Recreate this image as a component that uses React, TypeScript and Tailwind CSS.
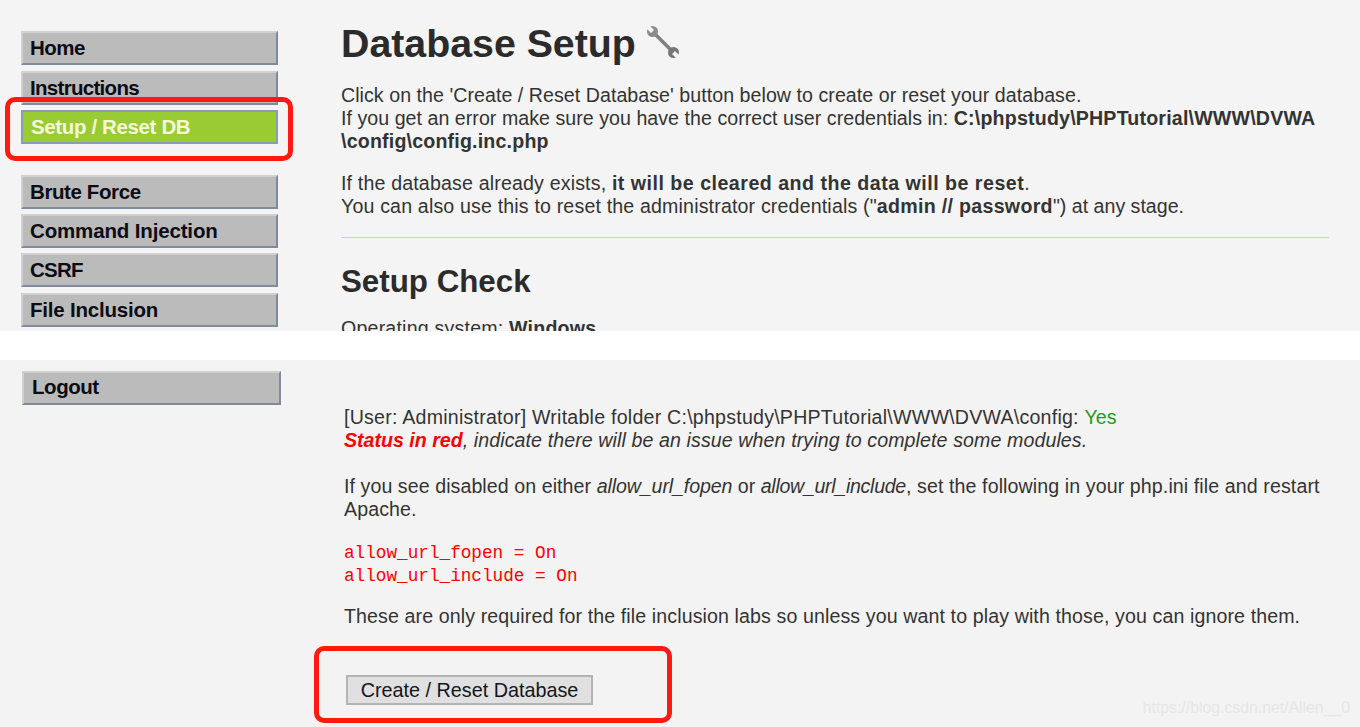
import React from 'react';

const topMenu = [
  [
    { label: 'Home', cls: 'tracking-[-0.5px]' },
    { label: 'Instructions', cls: 'mt-[1px] tracking-[-0.7px]' },
    { label: 'Setup / Reset DB', cls: 'tracking-[-0.37px]' },
  ],
  [
    { label: 'Brute Force', cls: 'tracking-[-0.4px]' },
    { label: 'Command Injection', cls: 'tracking-[-0.15px]' },
    { label: 'CSRF', cls: 'tracking-[-0.8px]' },
    { label: 'File Inclusion', cls: 'mt-[1px] tracking-[-0.2px]' },
  ],
];

const MenuItem = ({ label, cls }: { label: string; cls: string }) => {
  const active = label === 'Setup / Reset DB';
  return (
    <div
      className={`h-[34px] w-[257px] border-2 text-[20.5px] font-bold leading-[30px] ${cls} ${
        active
          ? 'border-[#8a9bb5] bg-[#99cc33] pl-2 text-[#f5f8d8]'
          : 'border-[#d0d0d0] border-r-[#7f8a9c] border-b-[#7f8a9c] bg-[#bbbbbb] pl-[7px] text-[#0c0c14]'
      }`}
    >
      {label}
    </div>
  );
};

const WrenchIcon = () => (
  <svg width="34" height="34" viewBox="0 0 34 34" className="mb-[2px] ml-[10px]">
    <path d="M7 7 L27 27" stroke="#808080" strokeWidth="3.6" />
    <circle cx="6.5" cy="6.5" r="5.5" fill="#8c8c8c" />
    <path d="M0 3 L3 0 L8 5 L5 8 Z" fill="#f4f4f4" />
    <circle cx="27.5" cy="27.5" r="5.5" fill="#777777" />
    <path d="M34 31 L31 34 L26 29 L29 26 Z" fill="#f4f4f4" />
  </svg>
);

export default function App() {
  return (
    <div className="relative h-[727px] w-[1360px] overflow-hidden bg-white font-['Liberation_Sans',Arial,sans-serif] text-[19.6px] leading-[23px] text-[#333333]">
      {/* upper half of the pasted screenshot */}
      <section className="flex h-[331px] overflow-hidden bg-[#f4f4f4]">
        <aside className="w-[341px] shrink-0 pl-[21px] pt-[31px]">
          <div className="flex flex-col gap-[5px]">
            {topMenu[0].map((item) => (
              <MenuItem key={item.label} {...item} />
            ))}
          </div>
          <div className="mt-[31px] flex flex-col gap-[5px]">
            {topMenu[1].map((item) => (
              <MenuItem key={item.label} {...item} />
            ))}
          </div>
        </aside>
        <main className="w-[988px] shrink-0">
          <div className="mt-[17px] flex h-[52px] items-center">
            <h1 className="text-[39.3px] font-bold leading-[52px] text-[#2b2b2b]">Database Setup</h1>
            <WrenchIcon />
          </div>
          <p className="mt-[15px]">
            <span className="tracking-[0.05px]">
              Click on the 'Create / Reset Database' button below to create or reset your database.
            </span>
            <br />
            <span className="tracking-[0.04px]">
              If you get an error make sure you have the correct user credentials in:{' '}
            </span>
            <b className="tracking-[0.19px]">
              C:\phpstudy\PHPTutorial\WWW\DVWA
              <br />
              \config\config.inc.php
            </b>
          </p>
          <p className="mt-[19px]">
            <span className="tracking-[0.16px]">If the database already exists, </span>
            <b className="tracking-[0.5px]">it will be cleared and the data will be reset</b>.
            <br />
            <span className="tracking-[0.16px]">You can also use this to reset the administrator credentials ("</span>
            <b className="tracking-[0.3px]">admin // password</b>") at any stage.
          </p>
          <hr className="mt-[19px] border-t border-[#c4d0ea]" />
          <h2 className="mt-[24px] text-[31.3px] font-bold leading-[40px] text-[#2b2b2b]">Setup Check</h2>
          <p className="mt-[15px] tracking-[0.2px]">
            Operating system: <b>Windows</b>
          </p>
        </main>
      </section>

      {/* white gap between the two pieces */}
      <div className="h-[29px] bg-white" />

      {/* lower half */}
      <section className="flex h-[367px] overflow-hidden bg-[#f3f3f3]">
        <aside className="w-[344px] shrink-0 pl-[22px] pt-[11px]">
          <div className="h-[34px] w-[259px] border-2 border-[#d0d0d0] border-r-[#7f8a9c] border-b-[#7f8a9c] bg-[#bbbbbb] pl-2 text-[20.5px] font-bold leading-[28px] tracking-[-0.45px] text-[#0c0c14]">
            Logout
          </div>
        </aside>
        <main className="w-[985px] shrink-0 pt-[46px]">
          <p>
            <span className="tracking-[0.23px]">
              [User: Administrator] Writable folder C:\phpstudy\PHPTutorial\WWW\DVWA\config:{' '}
            </span>
            <span className="text-[#1f9a1f]">Yes</span>
            <br />
            <i>
              <b className="text-[#ff0000]">Status in red</b>
              <span className="tracking-[0.1px]">, indicate there will be an issue when trying to complete some modules.</span>
            </i>
          </p>
          <p className="mt-[23px]">
            <span className="tracking-[0.07px]">If you see disabled on either </span>
            <i className="tracking-[-0.1px]">allow_url_fopen</i> or{' '}
            <i className="tracking-[-0.3px]">allow_url_include</i>
            <span className="tracking-[0.1px]">, set the following in your php.ini file and restart Apache.</span>
          </p>
          <p className="mt-[21px] font-['Liberation_Mono',monospace] text-[17.7px] text-[#ff0000]">
            allow_url_fopen = On
            <br />
            allow_url_include = On
          </p>
          <p className="mt-[17px] tracking-[0.107px]">
            These are only required for the file inclusion labs so unless you want to play with those, you can ignore them.
          </p>
          <button className="ml-[2px] mt-[47px] block h-[30px] w-[247px] border-2 border-[#b4b4b4] bg-[#e0e0e0] text-[19.8px] leading-[24px] text-[#14141e]">
            Create / Reset Database
          </button>
        </main>
      </section>

      {/* red annotation boxes drawn over the screenshot */}
      <div className="absolute left-[5px] top-[97px] h-[64px] w-[288px] rounded-[10px] border-[5px] border-[#ff1a10]" />
      <div className="absolute left-[314px] top-[646px] h-[77px] w-[358px] rounded-[10px] border-[5px] border-[#ff1a10]" />

      {/* watermark */}
      <span className="absolute bottom-[8px] right-[10px] text-[15.8px] leading-[22px] text-[#e6e6e6]">
        https://blog.csdn.net/Allen__0
      </span>
    </div>
  );
}
